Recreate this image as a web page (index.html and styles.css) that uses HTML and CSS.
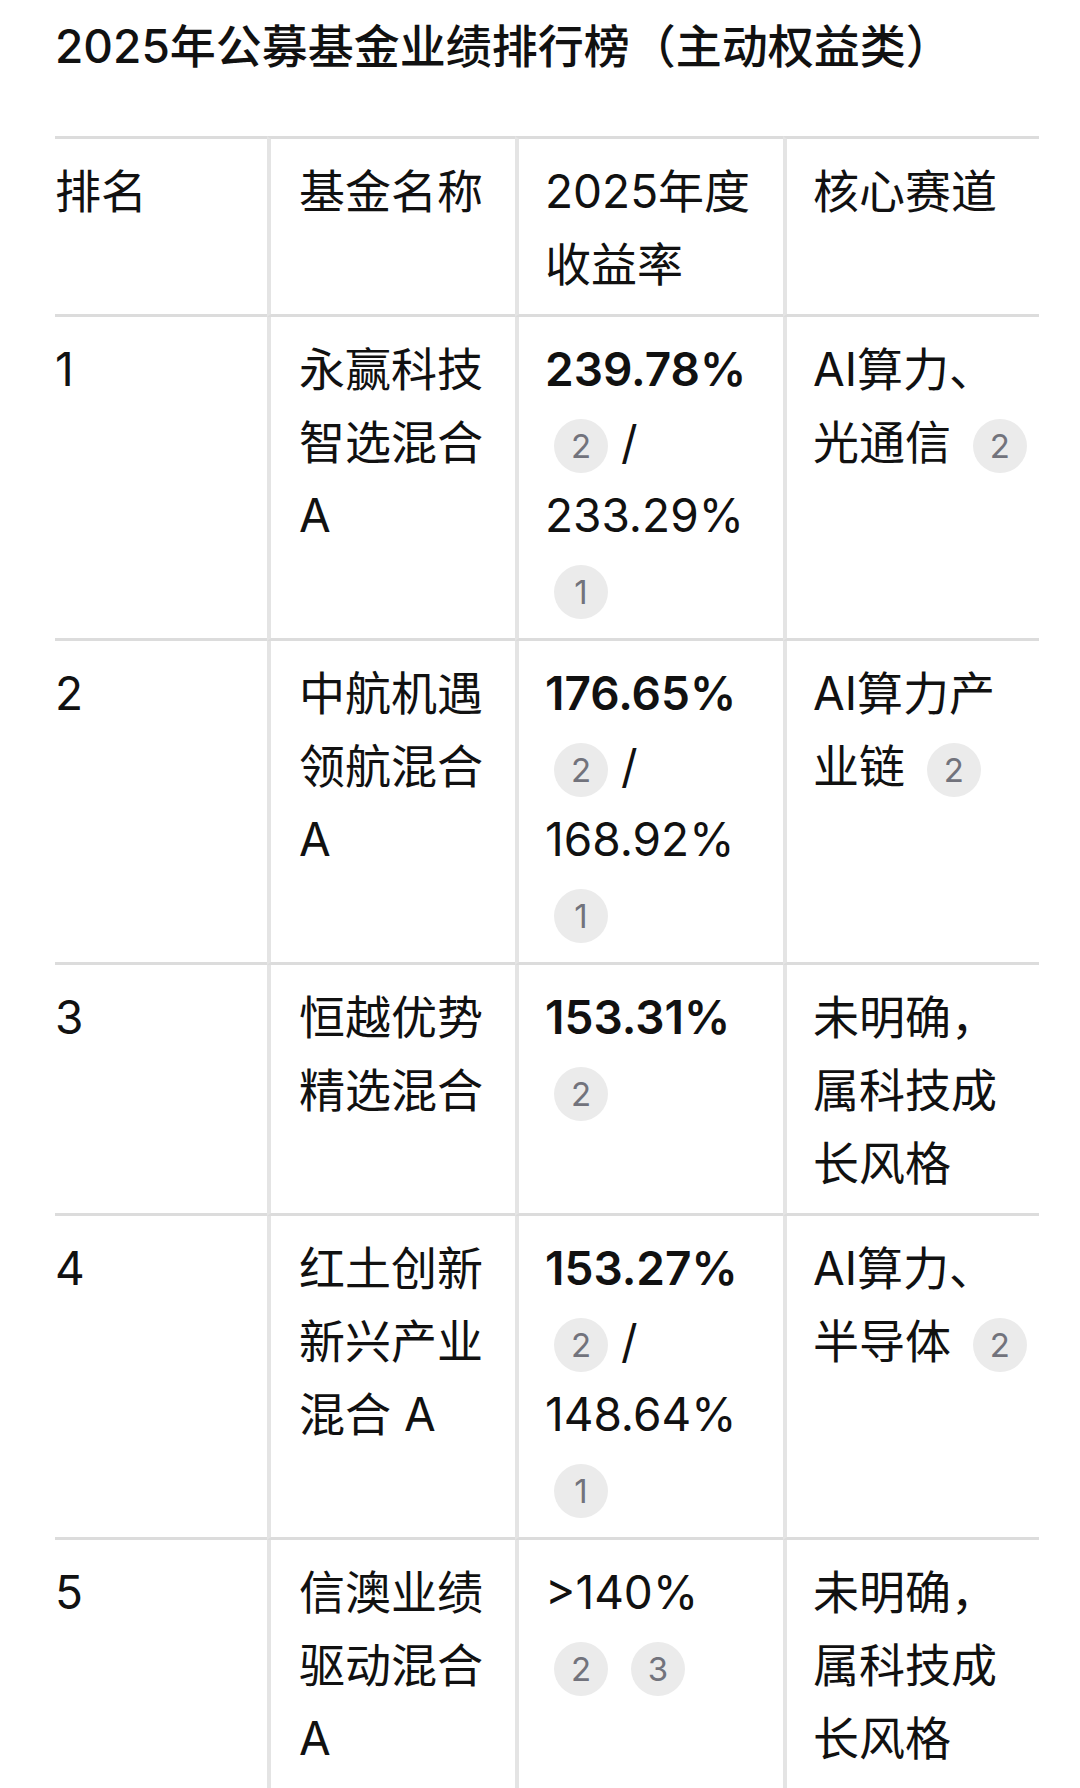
FILE: index.html
```html
<!DOCTYPE html>
<html lang="zh-CN">
<head>
<meta charset="utf-8">
<title>2025年公募基金业绩排行榜</title>
<link rel="stylesheet" href="styles.css">
</head>
<body>
<main class="page">
  <h1 class="title">2025年公募基金业绩排行榜（主动权益类）</h1>
  <table class="rank">
    <colgroup>
      <col class="c-rank">
      <col class="c-name">
      <col class="c-ret">
      <col class="c-track">
    </colgroup>
    <thead>
      <tr>
        <th>排名</th>
        <th>基金名称</th>
        <th>2025年度收益率</th>
        <th>核心赛道</th>
      </tr>
    </thead>
    <tbody>
      <tr>
        <td>1</td>
        <td>永赢科技智选混合 A</td>
        <td><strong class="val">239.78%</strong> <span class="cite">2</span> <span class="sep">/</span> <span class="alt">233.29%</span> <span class="cite">1</span></td>
        <td><span>AI算力、</span><span>光通信</span> <span class="cite">2</span></td>
      </tr>
      <tr>
        <td>2</td>
        <td>中航机遇领航混合 A</td>
        <td><strong class="val">176.65%</strong> <span class="cite">2</span> <span class="sep">/</span> <span class="alt">168.92%</span> <span class="cite">1</span></td>
        <td><span>AI算力产</span><span>业链</span> <span class="cite">2</span></td>
      </tr>
      <tr>
        <td>3</td>
        <td>恒越优势精选混合</td>
        <td><strong class="val">153.31%</strong> <span class="cite">2</span></td>
        <td>未明确，属科技成长风格</td>
      </tr>
      <tr>
        <td>4</td>
        <td>红土创新新兴产业混合 A</td>
        <td><strong class="val">153.27%</strong> <span class="cite">2</span> <span class="sep">/</span> <span class="alt">148.64%</span> <span class="cite">1</span></td>
        <td><span>AI算力、</span><span>半导体</span> <span class="cite">2</span></td>
      </tr>
      <tr>
        <td>5</td>
        <td>信澳业绩驱动混合 A</td>
        <td><span class="alt">&gt;140%</span> <span class="cites"><span class="cite">2</span> <span class="cite">3</span></span></td>
        <td>未明确，属科技成长风格</td>
      </tr>
    </tbody>
  </table>
</main>
</body>
</html>
```

FILE: styles.css
```css
html, body {
  margin: 0;
  padding: 0;
  background: #ffffff;
}

body {
  font-family: "Inter", "Noto Sans CJK SC", "Noto Sans", sans-serif;
  color: #111111;
  font-size: 46px;
  line-height: 73px;
}

.page {
  padding: 10px 0 0 55px;
}

.title {
  margin: 0 0 53px;
  font-size: 46px;
  line-height: 73px;
  font-weight: 500;
  letter-spacing: 0;
}

.rank {
  width: 984px;
  table-layout: fixed;
  border-collapse: separate;
  border-spacing: 0;
}

.c-rank { width: 212px; }
.c-name { width: 248px; }
.c-ret { width: 268px; }
.c-track { width: 256px; }

.rank th,
.rank td {
  text-align: left;
  vertical-align: top;
  font-weight: 400;
  padding: 16px 12px 13px 26px;
  border-bottom: 3px solid #dcdcdc;
  border-left: 4px solid #e4e4e4;
}

.rank th:nth-child(2),
.rank td:nth-child(2) {
  padding-left: 28px;
  padding-right: 10px;
}

.rank th:nth-child(4),
.rank td:nth-child(4) {
  padding-right: 7px;
}

.rank thead th {
  border-top: 3px solid #dcdcdc;
}

.rank th:first-child,
.rank td:first-child {
  border-left: 0;
  padding-left: 0;
}

.val {
  font-weight: 600;
}

.cites {
  white-space: nowrap;
}

.cite {
  display: inline-block;
  width: 54px;
  height: 54px;
  line-height: 54px;
  border-radius: 50%;
  background: #ebebeb;
  color: #72737c;
  font-size: 33px;
  font-weight: 400;
  text-align: center;
  vertical-align: middle;
  margin: 0 0 1px 9px;
}

.cites .cite + .cite {
  margin-left: 10px;
}
```
